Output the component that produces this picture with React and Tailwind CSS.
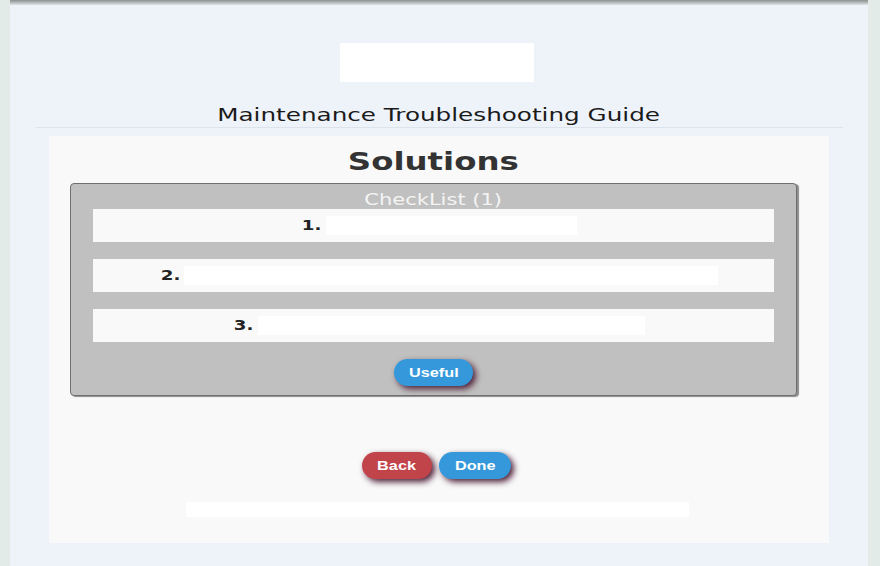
import React from 'react';

const steps = [
    { n: 1, w: 'w-[251px]' },
    { n: 2, w: 'w-[534px]' },
    { n: 3, w: 'w-[387px]' },
];

const btn = "h-[27px] rounded-full text-white text-[13px] font-bold font-['Liberation_Sans',sans-serif] shadow-[3px_3px_6px_#4e2038]";

const App = () => {
    return (
        <div className="min-h-[566px] bg-[#e3ebe8] pl-[10px] pr-[12px] font-['DejaVu_Sans',sans-serif] overflow-hidden">
            {/* top shadow strip */}
            <div className="h-[5px] bg-gradient-to-b from-[#8a8f8f] to-[#dfe5e6]" />
            <div className="bg-[#eef3fa] h-[561px] pt-[38px] flex flex-col items-center">
                <div className="w-[194px] h-[39px] bg-white mr-[4px]" />
                <h1 className="mt-[22px] text-[18px] leading-[22px] text-[#1a1a1a] scale-x-[1.37]">Maintenance Troubleshooting Guide</h1>
                <div className="mt-[1px] w-[807px] h-px bg-[#dde3ea]" />
                <div className="mt-[8px] w-[780px] h-[407px] bg-[#f9f9f9] flex flex-col items-center">
                    <h2 className="mt-[12px] mr-[12px] text-[24px] leading-[28px] font-bold text-[#333333] scale-x-[1.35]">Solutions</h2>
                    <div className="mt-[7px] self-start ml-[21px] w-[727px] h-[213px] bg-[#c0c0c0] border border-[#707070] rounded-[4px] shadow-[2px_1px_1px_#8c8c8c] flex flex-col items-center">
                        <div className="mt-[8px] text-[15px] leading-[17px] text-[#f4f4f4] scale-x-[1.4]">CheckList (1)</div>
                        <div className="w-[681px] flex flex-col gap-[17px]">
                            {steps.map((s) => (
                                <div key={s.n} className="h-[33px] bg-[#f9f9f9] flex items-center justify-center pl-[14px]">
                                    <span className="text-[14px] font-bold text-[#222] scale-x-[1.3]">{s.n}.</span>
                                    <span className={`${s.w} h-[19px] bg-white ml-[6px]`} />
                                </div>
                            ))}
                        </div>
                        <button className={`${btn} mt-[17px] w-[79px] bg-[#3498db]`}>
                            <span className="inline-block scale-x-[1.25]">Useful</span>
                        </button>
                    </div>
                    <div className="mt-[56px] flex gap-[7px] mr-[5px]">
                        <button className={`${btn} w-[70px] bg-[#c0444a]`}>
                            <span className="inline-block scale-x-[1.25]">Back</span>
                        </button>
                        <button className={`${btn} w-[72px] bg-[#3498db]`}>
                            <span className="inline-block scale-x-[1.25]">Done</span>
                        </button>
                    </div>
                    <div className="mt-[23px] w-[503px] h-[15px] bg-white mr-[3px]" />
                </div>
            </div>
        </div>
    );
};

export default App;
